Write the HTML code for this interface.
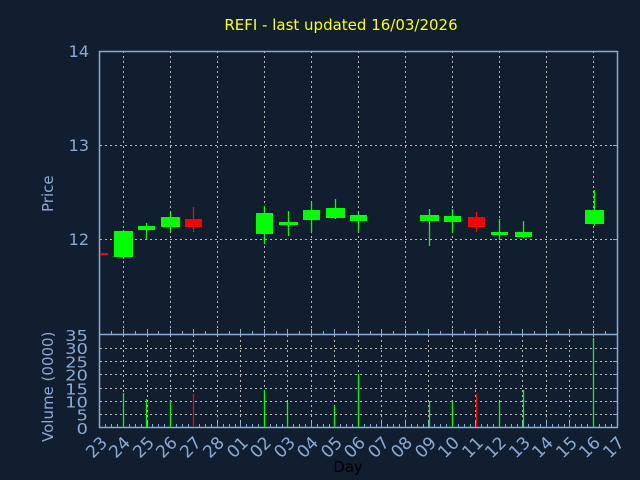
<!DOCTYPE html>
<html><head><style>
html,body{margin:0;padding:0;background:#111e2f;}
svg{display:block;}
text{font-family:"DejaVu Sans","Liberation Sans",sans-serif;}
</style></head><body>
<svg width="640" height="480" xmlns="http://www.w3.org/2000/svg">
<rect width="640" height="480" fill="#111e2f"/>
<text x="341" y="30" fill="#ffff00" font-size="15" text-anchor="middle">REFI - last updated 16/03/2026</text>
<g stroke="#b8b8b8" stroke-dasharray="2,3" stroke-width="1">
<line x1="100" y1="145.5" x2="617" y2="145.5"/>
<line x1="100" y1="239.5" x2="617" y2="239.5"/>
<line x1="123.5" y1="51" x2="123.5" y2="333"/><line x1="170.5" y1="51" x2="170.5" y2="333"/>
<line x1="217.5" y1="51" x2="217.5" y2="333"/><line x1="264.5" y1="51" x2="264.5" y2="333"/>
<line x1="311.5" y1="51" x2="311.5" y2="333"/><line x1="358.5" y1="51" x2="358.5" y2="333"/>
<line x1="405.5" y1="51" x2="405.5" y2="333"/><line x1="452.5" y1="51" x2="452.5" y2="333"/>
<line x1="499.5" y1="51" x2="499.5" y2="333"/><line x1="546.5" y1="51" x2="546.5" y2="333"/>
<line x1="593.5" y1="51" x2="593.5" y2="333"/>
<line x1="100" y1="348.5" x2="617" y2="348.5"/><line x1="100" y1="361.5" x2="617" y2="361.5"/>
<line x1="100" y1="374.5" x2="617" y2="374.5"/><line x1="100" y1="388.5" x2="617" y2="388.5"/>
<line x1="100" y1="401.5" x2="617" y2="401.5"/><line x1="100" y1="414.5" x2="617" y2="414.5"/>
<line x1="123.5" y1="335" x2="123.5" y2="427"/><line x1="147.5" y1="335" x2="147.5" y2="427"/>
<line x1="170.5" y1="335" x2="170.5" y2="427"/><line x1="193.5" y1="335" x2="193.5" y2="427"/>
<line x1="217.5" y1="335" x2="217.5" y2="427"/><line x1="240.5" y1="335" x2="240.5" y2="427"/>
<line x1="264.5" y1="335" x2="264.5" y2="427"/><line x1="287.5" y1="335" x2="287.5" y2="427"/>
<line x1="311.5" y1="335" x2="311.5" y2="427"/><line x1="334.5" y1="335" x2="334.5" y2="427"/>
<line x1="358.5" y1="335" x2="358.5" y2="427"/><line x1="381.5" y1="335" x2="381.5" y2="427"/>
<line x1="405.5" y1="335" x2="405.5" y2="427"/><line x1="428.5" y1="335" x2="428.5" y2="427"/>
<line x1="452.5" y1="335" x2="452.5" y2="427"/><line x1="475.5" y1="335" x2="475.5" y2="427"/>
<line x1="499.5" y1="335" x2="499.5" y2="427"/><line x1="522.5" y1="335" x2="522.5" y2="427"/>
<line x1="546.5" y1="335" x2="546.5" y2="427"/><line x1="569.5" y1="335" x2="569.5" y2="427"/>
<line x1="593.5" y1="335" x2="593.5" y2="427"/>
</g>
<g stroke="#8aaad4" fill="none" stroke-width="1.5">
<rect x="99.5" y="51.5" width="518" height="376"/>
<line x1="99.5" y1="334.5" x2="617" y2="334.5"/>
</g>
<!-- ticks -->
<g stroke="#8aaad4" stroke-width="1">
<path d="M111.5 334v-3M123.5 334v-5M135.5 334v-3M147.5 334v-5M158.5 334v-3M170.5 334v-5M182.5 334v-3M193.5 334v-5M205.5 334v-3M217.5 334v-5M229.5 334v-3M240.5 334v-5M252.5 334v-3M264.5 334v-5M276.5 334v-3M287.5 334v-5M299.5 334v-3M311.5 334v-5M323.5 334v-3M334.5 334v-5M346.5 334v-3M358.5 334v-5M370.5 334v-3M381.5 334v-5M393.5 334v-3M405.5 334v-5M417.5 334v-3M428.5 334v-5M440.5 334v-3M452.5 334v-5M464.5 334v-3M475.5 334v-5M487.5 334v-3M499.5 334v-5M511.5 334v-3M522.5 334v-5M534.5 334v-3M546.5 334v-5M558.5 334v-3M569.5 334v-5M581.5 334v-3M593.5 334v-5M605.5 334v-3"/>
<path d="M105.5 427v-3M111.5 427v-3M117.5 427v-3M123.5 427v-5M129.5 427v-3M135.5 427v-3M141.5 427v-3M147.5 427v-5M152.5 427v-3M158.5 427v-3M164.5 427v-3M170.5 427v-5M176.5 427v-3M182.5 427v-3M188.5 427v-3M193.5 427v-5M199.5 427v-3M205.5 427v-3M211.5 427v-3M217.5 427v-5M223.5 427v-3M229.5 427v-3M235.5 427v-3M240.5 427v-5M246.5 427v-3M252.5 427v-3M258.5 427v-3M264.5 427v-5M270.5 427v-3M276.5 427v-3M282.5 427v-3M287.5 427v-5M293.5 427v-3M299.5 427v-3M305.5 427v-3M311.5 427v-5M317.5 427v-3M323.5 427v-3M329.5 427v-3M334.5 427v-5M340.5 427v-3M346.5 427v-3M352.5 427v-3M358.5 427v-5M364.5 427v-3M370.5 427v-3M376.5 427v-3M381.5 427v-5M387.5 427v-3M393.5 427v-3M399.5 427v-3M405.5 427v-5M411.5 427v-3M417.5 427v-3M423.5 427v-3M428.5 427v-5M434.5 427v-3M440.5 427v-3M446.5 427v-3M452.5 427v-5M458.5 427v-3M464.5 427v-3M470.5 427v-3M475.5 427v-5M481.5 427v-3M487.5 427v-3M493.5 427v-3M499.5 427v-5M505.5 427v-3M511.5 427v-3M517.5 427v-3M522.5 427v-5M528.5 427v-3M534.5 427v-3M540.5 427v-3M546.5 427v-5M552.5 427v-3M558.5 427v-3M564.5 427v-3M569.5 427v-5M575.5 427v-3M581.5 427v-3M587.5 427v-3M593.5 427v-5M599.5 427v-3M605.5 427v-3M611.5 427v-3"/>
<path d="M617 145.5h-4M617 239.5h-4M617 348.5h-4M617 361.5h-4M617 374.5h-4M617 388.5h-4M617 401.5h-4M617 414.5h-4"/>
</g>
<!-- candles -->
<g stroke-width="1.3">
<rect x="100" y="253" width="8" height="2" fill="#ff0000"/>
<line x1="123.5" y1="230" x2="123.5" y2="259" stroke="#00ff00"/><rect x="114" y="231" width="19" height="26" fill="#00ff00"/>
<line x1="146.5" y1="223" x2="146.5" y2="239" stroke="#00ff00"/><rect x="138" y="226" width="17" height="4" fill="#00ff00"/>
<line x1="170.5" y1="211" x2="170.5" y2="232" stroke="#00ff00"/><rect x="161" y="217" width="19" height="10" fill="#00ff00"/>
<line x1="193.5" y1="207" x2="193.5" y2="232" stroke="#ff0000"/><rect x="185" y="219" width="17" height="8" fill="#ff0000"/>
<line x1="264.5" y1="206" x2="264.5" y2="244" stroke="#00ff00"/><rect x="256" y="213" width="17" height="21" fill="#00ff00"/>
<line x1="288.5" y1="211" x2="288.5" y2="236" stroke="#00ff00"/><rect x="279" y="222" width="19" height="3" fill="#00ff00"/>
<line x1="311.5" y1="202" x2="311.5" y2="232" stroke="#00ff00"/><rect x="303" y="210" width="17" height="10" fill="#00ff00"/>
<line x1="335.5" y1="199" x2="335.5" y2="219" stroke="#00ff00"/><rect x="326" y="208" width="19" height="10" fill="#00ff00"/>
<line x1="358.5" y1="213" x2="358.5" y2="232" stroke="#00ff00"/><rect x="350" y="215" width="17" height="6" fill="#00ff00"/>
<line x1="429.5" y1="209" x2="429.5" y2="246" stroke="#00ff00"/><rect x="420" y="215" width="19" height="6" fill="#00ff00"/>
<line x1="452.5" y1="209" x2="452.5" y2="233" stroke="#00ff00"/><rect x="444" y="216" width="17" height="6" fill="#00ff00"/>
<line x1="476.5" y1="212" x2="476.5" y2="232" stroke="#ff0000"/><rect x="468" y="217" width="17" height="10" fill="#ff0000"/>
<line x1="499.5" y1="219" x2="499.5" y2="240" stroke="#00ff00"/><rect x="491" y="232" width="17" height="3" fill="#00ff00"/>
<line x1="523.5" y1="221" x2="523.5" y2="238" stroke="#00ff00"/><rect x="515" y="232" width="17" height="5" fill="#00ff00"/>
<line x1="594.5" y1="190" x2="594.5" y2="226" stroke="#00ff00"/><rect x="585" y="210" width="19" height="14" fill="#00ff00"/>
</g>
<!-- volume -->
<g stroke-width="1.3">
<line x1="123.5" y1="393" x2="123.5" y2="427" stroke="#00ff00"/>
<line x1="146.5" y1="399" x2="146.5" y2="427" stroke="#00ff00"/>
<line x1="170.5" y1="401" x2="170.5" y2="427" stroke="#00ff00"/>
<line x1="193.5" y1="394" x2="193.5" y2="427" stroke="#ff0000"/>
<line x1="264.5" y1="390" x2="264.5" y2="427" stroke="#00ff00"/>
<line x1="287.5" y1="402" x2="287.5" y2="427" stroke="#00ff00"/>
<line x1="334.5" y1="406" x2="334.5" y2="427" stroke="#00ff00"/>
<line x1="358.5" y1="374" x2="358.5" y2="427" stroke="#00ff00"/>
<line x1="429.5" y1="401" x2="429.5" y2="427" stroke="#00ff00"/>
<line x1="452.5" y1="401" x2="452.5" y2="427" stroke="#00ff00"/>
<line x1="476.5" y1="394" x2="476.5" y2="427" stroke="#ff0000"/>
<line x1="499.5" y1="402" x2="499.5" y2="427" stroke="#00ff00"/>
<line x1="523.5" y1="390" x2="523.5" y2="427" stroke="#00ff00"/>
<line x1="593.5" y1="338" x2="593.5" y2="427" stroke="#00ff00"/>
</g>
<g fill="#8aaad4" font-size="16" text-anchor="end">
<text x="89" y="57">14</text>
<text x="89" y="151">13</text>
<text x="89" y="245">12</text>
</g>
<g fill="#8aaad4" font-size="18" text-anchor="end" transform="scale(1,0.82)">
<text x="88" y="416">35</text><text x="88" y="432">30</text><text x="88" y="448">25</text>
<text x="88" y="464">20</text><text x="88" y="481">15</text><text x="88" y="497">10</text>
<text x="88" y="513">5</text><text x="88" y="529">0</text>
</g>
<text transform="translate(53,212) rotate(-90)" fill="#8aaad4" font-size="15">Price</text>
<text transform="translate(53,442) rotate(-90)" fill="#8aaad4" font-size="15">Volume (0000)</text>
<text x="348" y="472" fill="#000000" font-size="15" text-anchor="middle">Day</text>
<g fill="#8aaad4" font-size="17">
<text transform="translate(93,459) rotate(-45)">23</text>
<text transform="translate(116,459) rotate(-45)">24</text>
<text transform="translate(140,459) rotate(-45)">25</text>
<text transform="translate(163,459) rotate(-45)">26</text>
<text transform="translate(187,459) rotate(-45)">27</text>
<text transform="translate(210,459) rotate(-45)">28</text>
<text transform="translate(234,459) rotate(-45)">01</text>
<text transform="translate(257,459) rotate(-45)">02</text>
<text transform="translate(281,459) rotate(-45)">03</text>
<text transform="translate(304,459) rotate(-45)">04</text>
<text transform="translate(328,459) rotate(-45)">05</text>
<text transform="translate(351,459) rotate(-45)">06</text>
<text transform="translate(375,459) rotate(-45)">07</text>
<text transform="translate(398,459) rotate(-45)">08</text>
<text transform="translate(422,459) rotate(-45)">09</text>
<text transform="translate(445,459) rotate(-45)">10</text>
<text transform="translate(469,459) rotate(-45)">11</text>
<text transform="translate(492,459) rotate(-45)">12</text>
<text transform="translate(516,459) rotate(-45)">13</text>
<text transform="translate(539,459) rotate(-45)">14</text>
<text transform="translate(563,459) rotate(-45)">15</text>
<text transform="translate(586,459) rotate(-45)">16</text>
<text transform="translate(610,459) rotate(-45)">17</text>
</g>
</svg>
</body></html>
